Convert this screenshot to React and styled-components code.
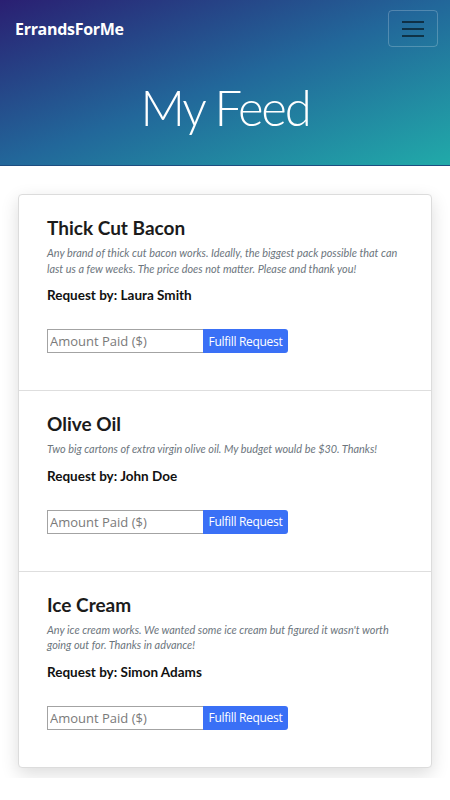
import React from "react";
import styled, { createGlobalStyle } from "styled-components";

const Global = createGlobalStyle`
  html, body { margin: 0; padding: 0; background: #fff; }
  body { font-family: Lato, "Open Sans", sans-serif; color: #212529; }
  * { box-sizing: border-box; }
`;

const Header = styled.header`
  height: 166px;
  background: linear-gradient(to bottom right, #2a1f72 0%, #22679a 50%, #21aaa9 100%);
  border-bottom: 1px solid #1d4d80;
  display: flex;
  flex-direction: column;
`;

const NavBar = styled.nav`
  display: flex;
  justify-content: space-between;
  align-items: center;
  padding: 10px 12px 0 15px;
`;

const Brand = styled.a`
  font-family: "Open Sans", Lato, sans-serif;
  font-weight: 700;
  font-size: 16px;
  letter-spacing: -0.3px;
  color: #fff;
  text-decoration: none;
`;

const Toggler = styled.button`
  width: 50px;
  height: 37px;
  border: 1px solid rgba(255, 255, 255, 0.22);
  border-radius: 4px;
  background: transparent;
  display: flex;
  align-items: center;
  justify-content: center;
  padding: 0;
`;

const Title = styled.h1`
  margin: 30px 0 0;
  text-align: center;
  font-family: Lato, "Open Sans", sans-serif;
  font-weight: 300;
  font-size: 49px;
  letter-spacing: -2.2px;
  color: #fff;
  line-height: 60px;
`;

const Wrap = styled.main`
  padding: 28px 18px 10px;
  overflow: hidden;
`;

const Card = styled.div`
  border: 1px solid #dcdcdc;
  border-radius: 4px;
  background: #fff;
  box-shadow: 0 6px 18px rgba(0, 0, 0, 0.14);
`;

const Item = styled.section`
  padding: 21px 29px 37px 28px;
  & + & { border-top: 1px solid #dedede; }
`;

const ItemTitle = styled.h2`
  margin: 0;
  font-family: Lato, sans-serif;
  font-weight: 700;
  font-size: 19px;
  line-height: 24px;
  color: #1b1b1b;
`;

const Desc = styled.p`
  margin: 5px 0 0;
  font-family: Lato, sans-serif;
  font-style: italic;
  font-size: 10.9px;
  line-height: 15.5px;
  color: #6c757d;
`;

const By = styled.p`
  margin: 10px 0 0;
  font-family: Lato, sans-serif;
  font-weight: 700;
  font-size: 13.5px;
  line-height: 18px;
  color: #111;
`;

const Form = styled.div`
  display: flex;
  margin-top: 25px;
`;

const Input = styled.input`
  width: 156px;
  height: 24px;
  border: 1px solid #a3a3a3;
  border-right: none;
  padding: 0 2px;
  font-family: "Open Sans", Lato, sans-serif;
  font-size: 13px;
  outline: none;
  &::placeholder { color: #7a7a7a; }
`;

const Button = styled.button`
  height: 24px;
  width: 85px;
  border: none;
  border-radius: 0 3px 3px 0;
  background: #3a70f6;
  color: #fff;
  font-family: "Open Sans", Lato, sans-serif;
  font-size: 12px;
  letter-spacing: -0.3px;
  padding: 0;
`;

const items = [
  {
    title: "Thick Cut Bacon",
    desc: "Any brand of thick cut bacon works. Ideally, the biggest pack possible that can last us a few weeks. The price does not matter. Please and thank you!",
    by: "Laura Smith",
  },
  {
    title: "Olive Oil",
    desc: "Two big cartons of extra virgin olive oil. My budget would be $30. Thanks!",
    by: "John Doe",
  },
  {
    title: "Ice Cream",
    desc: "Any ice cream works. We wanted some ice cream but figured it wasn't worth going out for. Thanks in advance!",
    by: "Simon Adams",
  },
];

export default function App() {
  return (
    <>
      <Global />
      <Header>
        <NavBar>
          <Brand href="#">ErrandsForMe</Brand>
          <Toggler aria-label="menu">
            <svg width="24" height="20" viewBox="0 0 24 20">
              <g stroke="rgba(0,0,0,0.55)" strokeWidth="2" strokeLinecap="butt">
                <line x1="1" y1="3" x2="23" y2="3" />
                <line x1="1" y1="10" x2="23" y2="10" />
                <line x1="1" y1="17" x2="23" y2="17" />
              </g>
            </svg>
          </Toggler>
        </NavBar>
        <Title>My Feed</Title>
      </Header>
      <Wrap>
        <Card>
          {items.map((it) => (
            <Item key={it.title}>
              <ItemTitle>{it.title}</ItemTitle>
              <Desc>{it.desc}</Desc>
              <By>Request by: {it.by}</By>
              <Form>
                <Input placeholder="Amount Paid ($)" />
                <Button>Fulfill Request</Button>
              </Form>
            </Item>
          ))}
        </Card>
      </Wrap>
    </>
  );
}
